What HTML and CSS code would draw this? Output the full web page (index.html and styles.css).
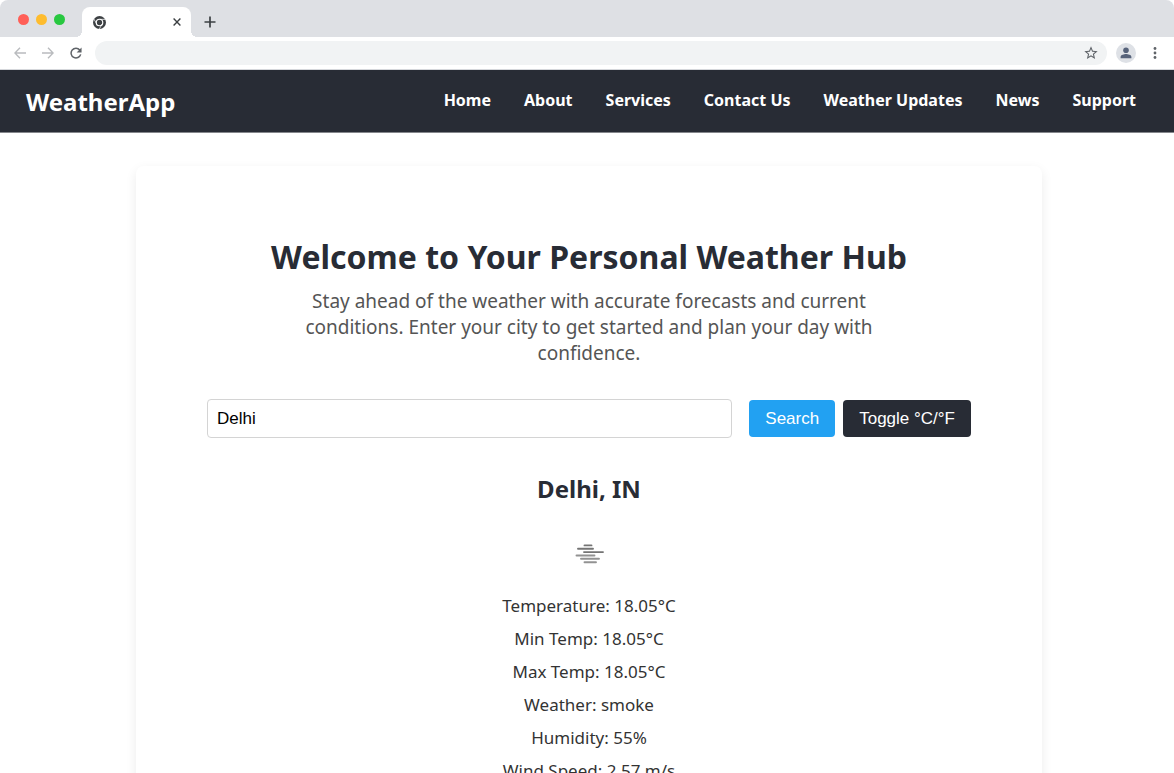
FILE: index.html
```html
<!DOCTYPE html>
<html lang="en">
<head>
<meta charset="utf-8">
<meta name="viewport" content="width=device-width, initial-scale=1">
<title>WeatherApp</title>
<link rel="stylesheet" href="styles.css">
</head>
<body>
<div class="browser">
  <div class="tab-strip">
    <div class="lights"><span class="light red"></span><span class="light amber"></span><span class="light green"></span></div>
    <div class="tab">
      <svg class="favicon" viewBox="0 0 24 24" aria-hidden="true">
        <circle cx="12" cy="12" r="12" fill="#3c4043"/>
        <circle cx="12" cy="12" r="6" fill="none" stroke="#fff" stroke-width="2.2"/>
        <path d="M12 6.2h10.5M7 14.8L1.9 5.8M17 14.8l-5.3 9" fill="none" stroke="#fff" stroke-width="1.4"/>
      </svg>
      <button class="icon-button tab-close" aria-label="Close tab"><svg width="8" height="8" viewBox="0 0 8 8"><path d="M.6.6l6.8 6.8M7.4.6L.6 7.4" stroke="#3c4043" stroke-width="1.4"/></svg></button>
    </div>
    <button class="icon-button new-tab" aria-label="New tab"><svg width="12" height="12" viewBox="0 0 12 12"><path d="M6 .5v11M.5 6h11" stroke="#3c4043" stroke-width="1.7"/></svg></button>
  </div>
  <div class="toolbar">
    <div class="history">
      <button class="icon-button" aria-label="Back"><svg width="12" height="12" viewBox="0 0 12 12" fill="none" stroke="#b9bbbe" stroke-width="1.4"><path d="M12 6H1M6 .8L.9 6 6 11.2"/></svg></button>
      <button class="icon-button" aria-label="Forward"><svg width="12" height="12" viewBox="0 0 12 12" fill="none" stroke="#b9bbbe" stroke-width="1.4"><path d="M0 6h11M6 .8L11.1 6 6 11.2"/></svg></button>
      <button class="icon-button" aria-label="Reload"><svg width="12" height="12" viewBox="0 0 13 13"><path d="M10.6 3.2A5.3 5.3 0 1 0 11.6 8" fill="none" stroke="#5f6368" stroke-width="1.6"/><path d="M12.5.6v5.3H7.2z" fill="#5f6368"/></svg></button>
    </div>
    <div class="omnibox">
      <input class="address" type="text" aria-label="Address">
      <button class="icon-button" aria-label="Bookmark"><svg width="16" height="16" viewBox="0 0 24 24" fill="#5f6368"><path d="M22 9.24l-7.19-.62L12 2 9.19 8.63 2 9.24l5.46 4.73L5.82 21 12 17.27 18.18 21l-1.63-7.03L22 9.24zM12 15.4l-3.76 2.27 1-4.28-3.32-2.88 4.38-.38L12 6.1l1.71 4.04 4.38.38-3.32 2.88 1 4.28L12 15.4z"/></svg></button>
    </div>
    <button class="icon-button" aria-label="Profile"><svg width="20" height="20" viewBox="0 0 20 20"><circle cx="10" cy="10" r="10" fill="#dee1e6"/><circle cx="10" cy="7.2" r="2.8" fill="#56627a"/><path d="M4.6 15.2v-1.3c0-1.9 3.6-2.8 5.4-2.8s5.4.9 5.4 2.8v1.3z" fill="#56627a"/></svg></button>
    <button class="icon-button menu" aria-label="Menu"><svg width="4" height="14" viewBox="0 0 4 14" fill="#5f6368"><circle cx="2" cy="2.5" r="1.4"/><circle cx="2" cy="7" r="1.4"/><circle cx="2" cy="11.5" r="1.4"/></svg></button>
  </div>
  <div class="page">
    <header class="site-header">
      <a class="brand" href="#">WeatherApp</a>
      <nav class="nav">
        <a href="#">Home</a><a href="#">About</a><a href="#">Services</a><a href="#">Contact Us</a><a href="#">Weather Updates</a><a href="#">News</a><a href="#">Support</a>
      </nav>
    </header>
    <main class="main">
      <section class="card">
        <h1 class="title">Welcome to Your Personal Weather Hub</h1>
        <p class="intro">Stay ahead of the weather with accurate forecasts and current conditions. Enter your city to get started and plan your day with confidence.</p>
        <form class="search">
          <input class="city" type="text" value="Delhi" aria-label="City">
          <button class="btn primary" type="button">Search</button>
          <button class="btn dark" type="button">Toggle °C/°F</button>
        </form>
        <h2 class="place">Delhi, IN</h2>
        <svg class="smoke" width="30" height="20" viewBox="0 0 30 20" stroke-width="1.9" stroke-linecap="round" role="img" aria-label="Smoke">
          <g stroke="#747474"><path d="M10.5 1.4h7M4 4.8h15M10 8.1h19"/></g>
          <g stroke="#929292"><path d="M2.5 11.5h18M7 14.8h18M10.5 18.2h11.5"/></g>
        </svg>
        <div class="readings">
          <p>Temperature: 18.05°C</p>
          <p>Min Temp: 18.05°C</p>
          <p>Max Temp: 18.05°C</p>
          <p>Weather: smoke</p>
          <p>Humidity: 55%</p>
          <p>Wind Speed: 2.57 m/s</p>
        </div>
      </section>
    </main>
  </div>
</div>
</body>
</html>
```
FILE: styles.css
```css
* { box-sizing: border-box; }
body { margin: 0; background: #fff; font-family: "Segoe UI", "Noto Sans", "Open Sans", sans-serif; color: #282c35; }
h1, h2, p { margin: 0; }
.browser { display: flex; flex-direction: column; height: 100vh; overflow: hidden; }
.icon-button { display: flex; padding: 0; border: 0; background: none; }

.tab-strip { display: flex; flex: none; align-items: flex-end; height: 37px; background: #dee0e4; border-radius: 8px 8px 0 0; }
.lights { display: flex; gap: 7px; width: 82px; padding: 0 0 12px 18px; }
.light { width: 11px; height: 11px; border-radius: 50%; }
.red { background: #ff5f57; }
.amber { background: #febc2e; }
.green { background: #28c840; }
.tab { position: relative; display: flex; align-items: center; justify-content: space-between; width: 109px; height: 30px; padding: 0 10px 0 11px; background: #fff; border-radius: 8px 8px 0 0; }
.tab::before, .tab::after { content: ""; position: absolute; bottom: 0; width: 6px; height: 6px; }
.tab::before { right: 100%; background: radial-gradient(circle at 0 0, transparent 6px, #fff 6px); }
.tab::after { left: 100%; background: radial-gradient(circle at 100% 0, transparent 6px, #fff 6px); }
.favicon { width: 13px; height: 13px; }
.new-tab { margin: 0 0 9px 13px; }

.toolbar { display: flex; flex: none; align-items: center; height: 33px; padding: 0 17px 0 14px; background: #fff; border-bottom: 1px solid #d5d7db; }
.history { display: flex; align-items: center; gap: 16px; width: 81px; }
.omnibox { display: flex; flex: 1; align-items: center; height: 24px; margin-right: 9px; padding-right: 8px; background: #f1f3f4; border-radius: 12px; }
.address { flex: 1; min-width: 0; padding: 0 12px; border: 0; background: transparent; }
.menu { margin-left: 17px; }

.page { flex: 1; min-height: 0; overflow: hidden; }
.site-header { display: flex; align-items: center; justify-content: space-between; height: 63px; padding: 0 38px 0 26px; background: #282c35; border-bottom: 1px solid #85878c; }
.brand { color: #fff; font-size: 24px; font-weight: 700; text-decoration: none; }
.nav { display: flex; gap: 33px; padding-bottom: 3px; }
.nav a { color: #fff; font-size: 16px; font-weight: 700; text-decoration: none; white-space: nowrap; }

.main { padding: 33px 132px 0 136px; }
.card { display: flex; flex-direction: column; align-items: center; max-width: 1000px; margin: 0 auto; padding: 66px 71px; border-radius: 8px; box-shadow: 0 4px 12px rgba(0, 0, 0, .08); text-align: center; }
.title { font-size: 32px; line-height: 50px; font-weight: 700; }
.intro { max-width: 600px; margin-top: 6px; font-size: 19px; line-height: 26px; color: #555; }
.search { display: flex; align-items: center; align-self: stretch; margin-top: 33px; }
.city { flex: 1; min-width: 0; height: 39px; margin-right: 17px; padding: 0 9px; border: 1px solid #d4d4d4; border-radius: 4px; background: #fff; color: #000; font: 17px "Liberation Sans", Arial, sans-serif; }
.btn { height: 37px; padding: 0 16px; border: 0; border-radius: 4px; color: #fff; font: 17px "Liberation Sans", Arial, sans-serif; white-space: nowrap; }
.primary { margin-right: 8px; background: #22a1f2; }
.dark { background: #282c35; }
.place { margin-top: 33px; font-size: 24px; line-height: 36px; font-weight: 700; }
.smoke { margin-top: 37px; }
.readings { margin-top: 25px; font-size: 17px; line-height: 33px; color: #333; }
```
